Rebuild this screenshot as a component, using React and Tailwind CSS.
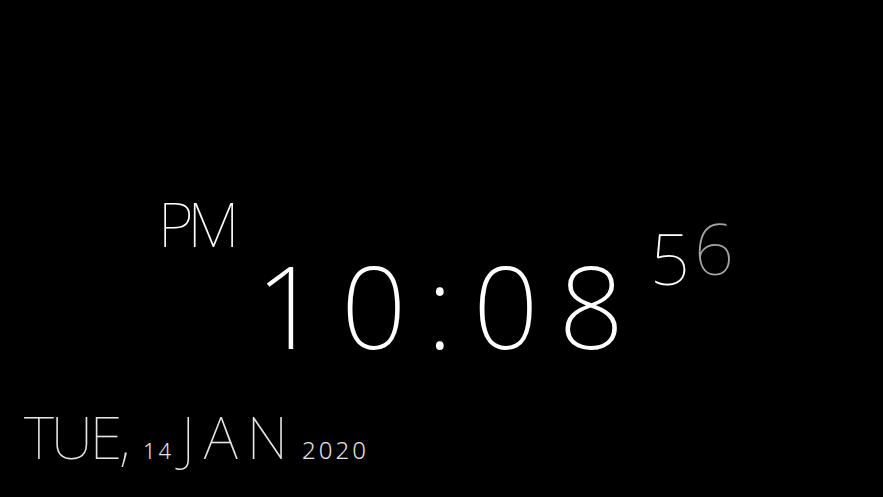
export default function App() {
  return (
    <div
      className="flex h-screen w-full flex-col bg-black text-white"
      style={{ fontFamily: '"Noto Sans", sans-serif' }}
    >
      {/* clock */}
      <div className="flex items-start pl-[158px] pt-[192px]">
        <span className="text-[62px] font-thin leading-none tracking-[-6px]">PM</span>
        <span className="ml-[22px] mt-[55px] text-[115px] font-extralight leading-none tracking-[20px]">
          10:08
        </span>
        <span className="ml-[6px] mt-[31px] flex text-[70px] font-thin leading-none">
          <span>5</span>
          <span className="ml-[4px] -translate-y-[10px] text-[#a3a3a3]">6</span>
        </span>
      </div>

      {/* date */}
      <div className="mt-auto flex items-baseline pb-[31px] pl-[24px] text-[#e5e5e5]">
        <span className="text-[59px] font-thin leading-none tracking-[-3px]">TUE,</span>
        <span className="ml-[16px] text-[22px] font-light leading-none tracking-[3px]">14</span>
        <span className="ml-[7px] text-[59px] font-thin leading-none tracking-[9px]">JAN</span>
        <span className="ml-[5px] text-[24px] font-light leading-none tracking-[3px]">2020</span>
      </div>
    </div>
  );
}
